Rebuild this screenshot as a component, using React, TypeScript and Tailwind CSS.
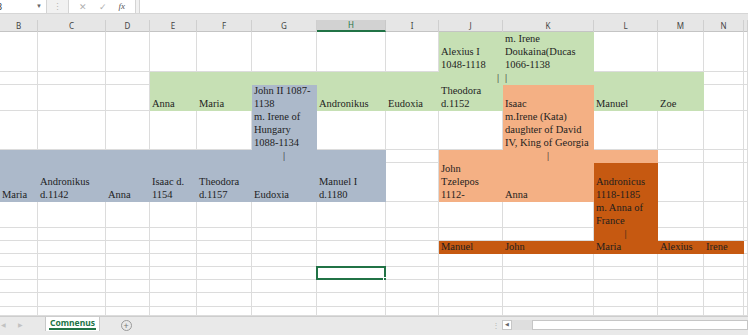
import React from "react";

const COLS = ["B", "C", "D", "E", "F", "G", "H", "I", "J", "K", "L", "M", "N", "O"];
const ROWS = 14;

type Fill = "g" | "b" | "o" | "d";
type Cell = { fill?: Fill; lines?: string[]; align?: "l" | "c" | "r" };

const FILL: Record<Fill, string> = {
  g: "bg-[#c6e0b4] border-[#c6e0b4]",
  b: "bg-[#acb9ca] border-[#acb9ca]",
  o: "bg-[#f4b084] border-[#f4b084]",
  d: "bg-[#c65911] border-[#c65911]",
};

const cells: Record<string, Cell> = {
  J1: { fill: "g", lines: ["Alexius I", "1048-1118"] },
  K1: { fill: "g", lines: ["m. Irene", "Doukaina(Ducas", "1066-1138"] },
  E2: { fill: "g" },
  F2: { fill: "g" },
  G2: { fill: "g" },
  H2: { fill: "g" },
  I2: { fill: "g" },
  J2: { fill: "g", lines: ["|"], align: "r" },
  K2: { fill: "g", lines: ["|"] },
  L2: { fill: "g" },
  M2: { fill: "g" },
  E3: { fill: "g", lines: ["Anna"] },
  F3: { fill: "g", lines: ["Maria"] },
  G3: { fill: "b", lines: ["John II 1087-", "1138"] },
  H3: { fill: "g", lines: ["Andronikus"] },
  I3: { fill: "g", lines: ["Eudoxia"] },
  J3: { fill: "g", lines: ["Theodora", "d.1152"] },
  K3: { fill: "o", lines: ["Isaac"] },
  L3: { fill: "g", lines: ["Manuel"] },
  M3: { fill: "g", lines: ["Zoe"] },
  G4: { fill: "b", lines: ["m. Irene of", "Hungary", "1088-1134"] },
  K4: { fill: "o", lines: ["m.Irene (Kata)", "daughter of David", "IV, King of Georgia"] },
  B5: { fill: "b" },
  C5: { fill: "b" },
  D5: { fill: "b" },
  E5: { fill: "b" },
  F5: { fill: "b" },
  G5: { fill: "b", lines: ["|"], align: "c" },
  H5: { fill: "b" },
  J5: { fill: "o" },
  K5: { fill: "o", lines: ["|"], align: "c" },
  L5: { fill: "o" },
  B6: { fill: "b", lines: ["Maria"] },
  C6: { fill: "b", lines: ["Andronikus", "d.1142"] },
  D6: { fill: "b", lines: ["Anna"] },
  E6: { fill: "b", lines: ["Isaac d.", "1154"] },
  F6: { fill: "b", lines: ["Theodora", "d.1157"] },
  G6: { fill: "b", lines: ["Eudoxia"] },
  H6: { fill: "b", lines: ["Manuel I", "d.1180"] },
  J6: { fill: "o", lines: ["John", "Tzelepos", "1112-"] },
  K6: { fill: "o", lines: ["Anna"] },
  L6: { fill: "d", lines: ["Andronicus", "1118-1185"] },
  L7: { fill: "d", lines: ["m. Anna of", "France"] },
  L8: { fill: "d", lines: ["|"], align: "c" },
  J9: { fill: "d", lines: ["Manuel"] },
  K9: { fill: "d", lines: ["John"] },
  L9: { fill: "d", lines: ["Maria"] },
  M9: { fill: "d", lines: ["Alexius"] },
  N9: { fill: "d", lines: ["Irene"] },
};

function FormulaBar() {
  return (
    <div className="flex h-[14px] border-b border-[#d6d6d6] bg-[#f1f1f1] text-[9px] leading-[13px]">
      <div className="relative flex w-[47px] items-center overflow-hidden border-r border-[#d4d4d4] bg-white text-[#333]">
        <span className="-ml-[3px]">3</span>
        <span className="absolute right-[4px] top-0 text-[6px] text-[#666]">▼</span>
      </div>
      <div className="flex w-[21px] justify-center text-[#b5b5b5]">⋮</div>
      <div className="flex w-[68px] items-center justify-around border-x border-[#d4d4d4] bg-white px-[4px]">
        <span className="text-[#b0b0b0]">✕</span>
        <span className="text-[#b0b0b0]">✓</span>
        <span className="font-['Liberation_Serif',serif] italic text-[#555]">fx</span>
      </div>
      <div className="w-[3px]" />
      <div className="flex-1 border-l border-[#d4d4d4] bg-white" />
    </div>
  );
}

function ColumnHeaders() {
  return (
    <div className="bg-[#e6e6e6] pt-[6px]">
      <div className="grid h-[12px] grid-cols-[38px_68px_44px_47px_55px_65px_69px_53px_64px_91px_64px_46px_40px_4px] border-b border-[#c4c4c4]">
        {COLS.map((c) =>
          c === "H" ? (
            <div
              key={c}
              className="border-r border-b-2 border-r-[#c8c8c8] border-b-[#217346] bg-[#d2d2d2] text-center text-[8px] leading-[10px] text-[#217346]"
            >
              {c}
            </div>
          ) : (
            <div
              key={c}
              className="border-r border-[#cfcfcf] text-center text-[8px] leading-[11px] text-[#444]"
            >
              {c === "O" ? "" : c}
            </div>
          ),
        )}
      </div>
    </div>
  );
}

function Sheet() {
  const out: React.ReactNode[] = [];
  for (let r = 1; r <= ROWS; r++) {
    for (const c of COLS) {
      const key = `${c}${r}`;
      const cell = cells[key] ?? {};
      const fill = cell.fill ? FILL[cell.fill] : "bg-white border-[#dcdcdc]";
      const align =
        cell.align === "c" ? "text-center" : cell.align === "r" ? "text-right pr-[3px]" : "pl-[2px]";
      out.push(
        <div
          key={key}
          className={`relative flex flex-col justify-end overflow-visible whitespace-nowrap border-r border-b ${fill} ${align}`}
        >
          {cell.lines?.map((l, i) => (
            <div key={i} className="h-[13px] leading-[13px]">
              {l}
            </div>
          ))}
          {key === "H11" ? (
            <div className="absolute -left-px -top-px h-[14px] w-[70px] border-2 border-[#217346]">
              <div className="absolute -bottom-[3px] -right-[3px] h-[4px] w-[4px] border border-white bg-[#217346]" />
            </div>
          ) : null}
        </div>,
      );
    }
  }
  return (
    <div className="grid grid-cols-[38px_68px_44px_47px_55px_65px_69px_53px_64px_91px_64px_46px_40px_4px] grid-rows-[40px_13px_26px_39px_13px_39px_26px_13px_13px_13px_13px_13px_14px_9px] font-['Liberation_Serif',serif] text-[10.5px] text-[#1e1e1e]">
      {out}
    </div>
  );
}

function TabBar() {
  return (
    <div className="flex h-[19px] items-start border-t border-[#cdcdcd] bg-[#e9e9e9]">
      <div className="flex h-[16px] w-[45px] items-center gap-[12px] pl-[1px] text-[6px] text-[#c2c2c2]">
        <span>◀</span>
        <span>▶</span>
      </div>
      <div className="flex h-[14px] w-[55px] items-start justify-center border-x border-[#c8c8c8] bg-white">
        <span className="border-b-2 border-[#217346] px-[1px] text-[8.5px] font-bold leading-[11px] text-[#217346]">
          Comnenus
        </span>
      </div>
      <div className="flex h-[16px] w-[52px] items-center justify-center">
        <div className="flex h-[11px] w-[11px] items-center justify-center rounded-full border border-[#9a9a9a] text-[9px] leading-none text-[#777]">
          +
        </div>
      </div>
      <div className="flex-1" />
      <div className="flex h-[16px] w-[10px] items-center text-[8px] text-[#b5b5b5]">⋮</div>
      <div className="mt-[3px] flex h-[10px] items-center">
        <div className="flex h-[10px] w-[10px] items-center justify-center border border-[#c6c6c6] bg-white text-[5px] text-[#666]">
          ◀
        </div>
        <div className="h-[10px] w-[20px] bg-[#dedede]" />
        <div className="h-[10px] w-[216px] border border-[#c6c6c6] bg-white" />
      </div>
    </div>
  );
}

export default function App() {
  return (
    <div className="h-[335px] w-[748px] overflow-hidden bg-white font-['Noto_Sans',sans-serif]">
      <FormulaBar />
      <ColumnHeaders />
      <Sheet />
      <TabBar />
    </div>
  );
}
